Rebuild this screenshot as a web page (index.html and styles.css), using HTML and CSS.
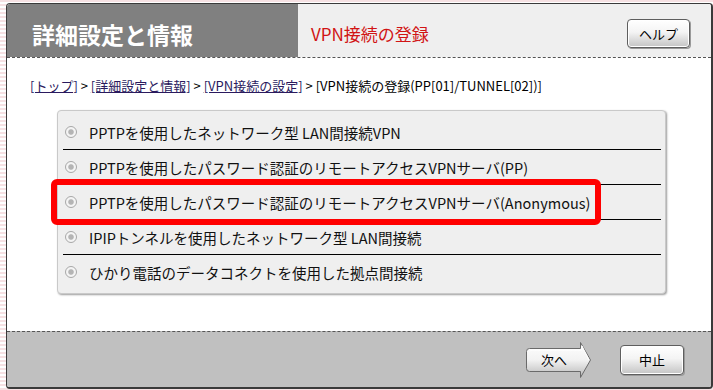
FILE: index.html
```html
<!DOCTYPE html>
<html lang="ja">
<head>
    <meta charset="UTF-8">
    <meta name="viewport" content="width=device-width, initial-scale=1.0">
    <title>VPN接続の登録</title>
    <link rel="stylesheet" href="styles.css">
</head>
<body>
    <div class="frame">
        <!-- ヘッダー -->
        <div class="header">
            <div class="header-title">詳細設定と情報</div>
            <div class="header-sub">
                <span class="page-name">VPN接続の登録</span>
                <button class="btn btn-help">ヘルプ</button>
            </div>
        </div>

        <!-- 本文 -->
        <div class="content">
            <p class="breadcrumb">
                <a href="#">[トップ]</a> &gt; <a href="#">[詳細設定と情報]</a> &gt; <a href="#">[VPN接続の設定]</a> &gt; [VPN接続の登録(PP[01]/TUNNEL[02])]
            </p>

            <div class="options">
                <label class="option"><span class="radio"></span>PPTPを使用したネットワーク型 LAN間接続VPN</label>
                <label class="option"><span class="radio"></span>PPTPを使用したパスワード認証のリモートアクセスVPNサーバ(PP)</label>
                <label class="option"><span class="radio"></span>PPTPを使用したパスワード認証のリモートアクセスVPNサーバ(Anonymous)</label>
                <label class="option"><span class="radio"></span>IPIPトンネルを使用したネットワーク型 LAN間接続</label>
                <label class="option"><span class="radio"></span>ひかり電話のデータコネクトを使用した拠点間接続</label>
                <div class="highlight"></div>
            </div>
        </div>

        <!-- フッター -->
        <div class="footer">
            <button class="btn-next">
                <svg width="66" height="38" viewBox="0 0 66 38">
                    <defs>
                        <linearGradient id="nextGrad" x1="0" y1="0" x2="0" y2="1">
                            <stop offset="0" stop-color="#ffffff"/>
                            <stop offset="0.5" stop-color="#f2f2f2"/>
                            <stop offset="1" stop-color="#b8b8b8"/>
                        </linearGradient>
                    </defs>
                    <path d="M3.5 7.5 H54.5 V1.5 L64.5 19 L54.5 36.5 V30.5 H3.5 Q0.5 30.5 0.5 27.5 V10.5 Q0.5 7.5 3.5 7.5 Z" fill="url(#nextGrad)" stroke="#6a6a6a" stroke-width="1"/>
                    <path d="M4 9 H56 V5 L63 19" fill="none" stroke="#ffffff" stroke-width="1"/>
                    <text x="28" y="24" text-anchor="middle" class="btn-text">次へ</text>
                </svg>
            </button>
            <button class="btn btn-cancel">中止</button>
        </div>
    </div>
</body>
</html>
```

FILE: styles.css
```css
body {
    margin: 0;
    height: 390px;
    background: repeating-linear-gradient(to bottom, #f6e1e3 0, #f6e1e3 2px, #ffffff 2px, #ffffff 4px);
    font-family: "Noto Sans CJK JP", "DejaVu Sans", sans-serif;
    overflow: hidden;
}

.frame {
    position: absolute;
    left: 6px;
    top: 3px;
    width: 704px;
    height: 383px;
    border: 1px solid #3a3a3a;
    border-right-width: 2px;
    border-bottom-width: 2px;
    border-radius: 4px;
    overflow: hidden;
    display: flex;
    flex-direction: column;
    background: #ffffff;
}

.header {
    display: flex;
    height: 53px;
    border-bottom: 1px dashed #555;
}

.header-title {
    width: 266px;
    background: #808080;
    color: #ffffff;
    font-size: 23px;
    font-weight: bold;
    line-height: 1;
    padding: 19px 0 0 25px;
}

.header-sub {
    flex: 1;
    background: #efefef;
    display: flex;
    align-items: center;
    justify-content: space-between;
    padding: 6px 21px 0 13px;
}

.page-name {
    color: #d11414;
    font-size: 17px;
    line-height: 1;
}

.btn {
    font-family: "Noto Sans CJK JP", sans-serif;
    font-size: 13px;
    color: #000;
    height: 29px;
    width: 63px;
    padding: 0;
    border: 1px solid #5e5e5e;
    border-radius: 4px;
    background: linear-gradient(to bottom, #ffffff 0%, #f4f4f4 45%, #c4c4c4 100%);
    box-shadow: inset 0 0 0 1px #ffffff, 1px 1px 0 #9a9a9a;
    cursor: pointer;
}

.content {
    flex: 1;
    padding: 0 0 0 50px;
    position: relative;
}

.breadcrumb {
    margin: 20px 0 0 -27px;
    font-size: 13px;
    line-height: 16px;
    color: #000;
}

.breadcrumb a {
    color: #2a1a5e;
}

.options {
    position: relative;
    width: 598px;
    margin-top: 16px;
    padding: 4px 4px 4px 5px;
    background: #efefef;
    border: 1px solid #c9c9c9;
    border-radius: 4px;
    box-shadow: 1px 1px 2px #9c9c9c;
}

.option {
    display: flex;
    align-items: center;
    height: 34px;
    border-bottom: 1px solid #000;
    font-size: 14.5px;
    color: #111;
    cursor: pointer;
    white-space: nowrap;
}

.option:last-of-type {
    border-bottom: none;
}

.radio {
    width: 10px;
    height: 10px;
    margin: 0 12px 0 2px;
    border: 1px solid #a8a8a8;
    border-radius: 50%;
    background: radial-gradient(circle, #b4b4b4 0 32%, #f4f4f4 46%);
    flex-shrink: 0;
}

.highlight {
    position: absolute;
    left: -7px;
    top: 68px;
    width: 550px;
    height: 46px;
    box-sizing: border-box;
    border: 6px solid #ff0000;
    border-radius: 6px;
    pointer-events: none;
}

.footer {
    height: 55px;
    background: #c0c0c0;
    border-top: 1px dashed #555;
    display: flex;
    align-items: center;
    justify-content: flex-end;
    padding-right: 27px;
    gap: 28px;
}

.btn-next {
    padding: 0;
    border: none;
    background: none;
    height: 38px;
    cursor: pointer;
    display: block;
}

.btn-next svg {
    display: block;
}

.btn-text {
    font-family: "Noto Sans CJK JP", sans-serif;
    font-size: 13px;
    fill: #000;
}

.btn-cancel {
    width: 64px;
    height: 30px;
}
```
